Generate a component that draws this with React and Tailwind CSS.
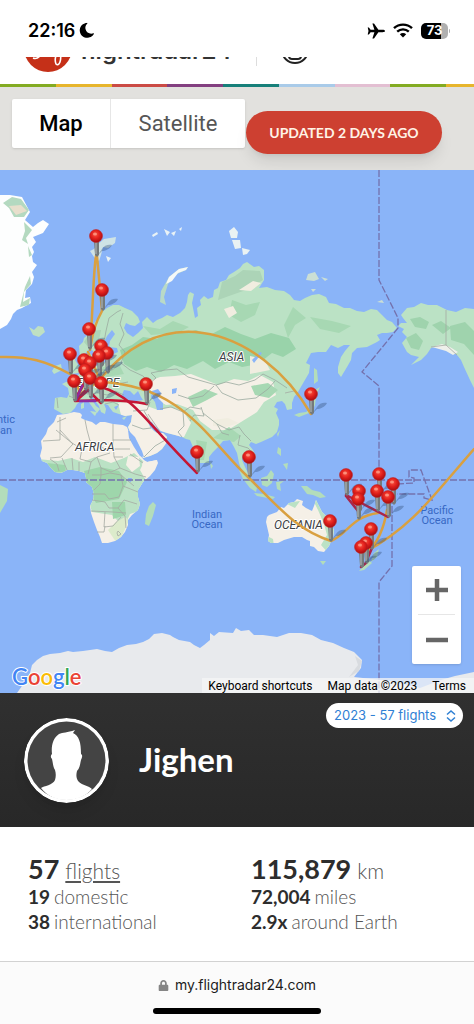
import { FaMoon, FaLock } from "react-icons/fa";

const stripes = [
  "bg-[#83ab22]",
  "bg-[#e7b52c]",
  "bg-[#cb4b45]",
  "bg-[#833f80]",
  "bg-[#17807a]",
  "bg-[#a9cbe9]",
  "bg-[#e3bfd2]",
  "bg-[#83ab22]",
];

const pins = [
  [96, 236], [102, 290], [89, 329], [101, 346], [107, 353], [70, 354], [99, 356],
  [84, 360], [90, 363], [85, 370], [90, 378], [74, 381], [101, 383], [146, 384],
  [311, 394], [197, 452], [249, 457], [379, 474], [346, 475], [393, 484],
  [359, 491], [377, 491], [388, 497], [358, 499], [330, 521], [371, 529],
  [366, 543], [361, 547],
];

const eurasia =
  "M80 357L79 346L83 342L84 338L90 333L92 328L95 322L98 318L102 312L107 308L113 305L119 305L125 308L132 311L138 317L140 322L135 326L130 325L126 323L124 328L127 333L133 337L138 333L143 328L142 322L147 317L153 323L157 320L162 318L167 315L173 317L180 313L185 308L187 302L188 295L190 292L194 294L192 303L195 318L198 316L197 308L201 305L200 300L204 296L208 299L213 297L214 290L218 288L220 282L226 280L229 275L234 272L240 268L243 264L247 262L254 267L259 266L264 270L264 280L259 288L267 287L275 290L284 291L290 295L294 300L300 301L305 298L312 295L319 294L326 297L329 303L336 304L344 308L350 308L357 311L364 312L371 309L377 310L382 315L387 320L392 322L397 328L393 332L387 333L382 333L377 335L380 340L377 342L367 347L357 348L352 353L351 360L347 367L341 377L338 373L338 367L341 357L345 351L350 345L344 345L338 348L331 345L326 352L318 352L311 353L306 363L310 365L309 373L302 385L298 392L294 397L292 403L292 409L287 410L285 404L282 401L277 402L274 407L278 409L276 413L279 420L279 425L277 432L272 437L261 442L256 444L251 442L249 445L253 450L256 456L252 461L249 460L247 457L243 455L242 460L245 467L250 477L246 475L241 469L239 463L237 453L234 447L230 440L223 441L218 447L213 452L209 457L209 463L204 463L199 463L196 454L193 447L190 440L186 439L182 437L175 435L167 433L161 431L155 426L152 422L147 420L150 427L154 431L157 433L163 433L167 437L167 442L162 449L157 453L150 456L143 458L140 452L138 447L133 439L130 432L128 427L131 422L132 415L125 416L119 414L113 412L110 408L108 405L104 404L106 409L105 414L101 412L99 406L96 402L93 397L90 397L96 406L100 409L97 413L93 408L88 401L82 400L77 404L75 408L70 413L63 414L54 409L55 398L61 397L67 398L69 394L68 388L62 384L66 382L72 381L76 377L80 373L84 369L86 363L86 355L89 352L92 356L91 363L96 366L103 363L110 360L111 355L118 352L117 348L109 347L110 341L115 334L112 330L107 336L104 342L105 347L101 352L98 357L95 357L93 351L90 348L86 353Z";

const africa =
  "M57 415L66 414L74 412L80 413L82 415L81 418L85 420L92 422L96 425L100 422L105 422L113 424L123 425L127 427L129 432L131 440L135 446L138 453L144 460L147 462L157 460L158 463L155 470L150 476L143 482L140 487L138 490L138 497L140 504L138 510L132 515L128 520L128 525L125 532L121 537L115 541L108 543L102 543L100 537L97 530L94 522L91 513L90 506L93 500L94 494L92 487L86 482L86 478L85 473L79 471L73 470L67 470L61 473L55 472L51 468L47 463L42 461L40 456L42 448L41 441L46 434L48 428L54 422Z";

const america =
  "M401 315L407 308L414 307L421 303L428 305L437 305L447 310L456 312L465 308L474 309V388L470 380L464 367L461 360L457 355L452 351L447 348L438 346L431 348L427 354L421 360L411 365L419 357L411 355L407 352L402 343L407 337L402 332L404 329L398 326L401 323L407 323L403 318Z";

const australia =
  "M266 522L267 517L269 515L277 512L281 507L284 508L289 503L294 502L297 499L303 501L302 505L306 508L312 511L314 506L316 500L319 506L322 512L326 516L330 522L334 530L333 537L329 546L324 552L318 551L314 547L310 546L310 541L307 540L302 537L294 537L284 540L278 543L271 543L268 541L269 535Z";

function Land() {
  return (
    <g>
      <path
        d="M0 195L10 195L22 197L30 212L25 220L33 227L38 223L43 220L49 224L43 233L33 237L36 242L32 247L34 252L32 256L33 262L37 265L32 272L34 277L32 284L26 290L25 298L30 297L31 303L22 308L17 310L13 314L11 319L7 325L0 329Z"
        fill="#fdfefe"
      />
      <path d="M3 203L12 197L21 199L29 210L24 217L14 217L9 208ZM24 222L32 230L26 238L28 244L22 240L25 231ZM28 246L32 255L29 257ZM30 276L31 284L24 292L23 302L30 298L29 305L20 307L25 287Z" fill="#b4d9c0" />
      <path d="M9 206L21 205L27 211L16 215Z" fill="#e8dfcc" />
      <path d="M29 327L34 330L38 326L43 327L45 332L39 337L33 335Z" fill="#bfe0c3" />
      <path d="M97 245L104 239L116 237L115 243L108 248L103 247L101 255L99 261L94 257L90 251L94 249Z" fill="#cfe3e5" />
      <path d="M106 256L111 258L108 262ZM152 235L157 232L158 234L153 237ZM164 229L170 232L167 236ZM171 233L176 231L174 236ZM179 229L182 227L181 231Z" fill="#e9f2f5" />
      <path d="M229 231L234 227L238 232L237 238L231 238ZM232 240L240 240L241 248L235 249ZM242 248L250 250L247 254L243 255Z" fill="#eaf2f3" />
      <path d="M188 267L179 269L169 277L161 291L160 302L166 305L164 297L168 284L177 274L186 270Z" fill="#b9dac7" />
      <path d="M188 267L179 269L169 277L166 284L172 281L178 273L186 270Z" fill="#f4f8f8" />
      <path d="M306 280L308 274L315 272L319 279L314 281ZM321 277L328 279L325 281ZM311 289L316 289L313 292ZM377 302L382 300L384 303Z" fill="#cbdfd5" />
      <path d={eurasia} fill="#bbe2c5" />
      <path d={africa} fill="#f5f0e7" />
      <path d={america} fill="#bbe2c5" />
      <path d={australia} fill="#f5f0e7" />
      <path d="M68 353L72 350L76 355L75 360L80 368L79 373L70 374L73 368L69 364L71 359ZM55 366L61 364L62 370L54 374L52 371Z" fill="#bbe2c5" />
      <path d="M81 404L84 402L84 408L81 409ZM90 411L97 412L95 416ZM107 417L112 417ZM122 418L127 416L124 420Z" fill="#bbe2c5" />
      <path d="M239 470L244 474L252 482L257 488L256 492L250 488L243 479ZM254 493L264 494L275 497L273 499L257 496ZM261 478L267 476L271 470L274 474L272 483L267 487L262 485ZM276 482L284 481L280 484L281 491L277 489ZM278 447L281 449L281 456L277 453ZM283 464L288 463L287 470ZM301 486L307 486L312 490L320 492L326 497L320 498L313 495L307 494ZM320 561L326 561L323 565ZM277 434L280 430L278 437ZM294 415L299 413L306 412L311 408L313 401L316 397L315 405L312 412L304 415L299 417ZM315 390L320 387L317 393ZM314 368L317 370L318 381L314 384ZM149 506L153 502L156 505L153 516L149 526L145 524L146 514ZM374 553L379 549L377 557L371 562ZM369 560L372 563L364 570L359 571ZM0 485L8 489L7 501L0 513ZM210 462L213 466L211 469Z" fill="#b3ddbb" />
      <path
        d="M17 693L24 683L30 673L32 665L37 660L43 656L50 654L60 653L68 651L73 652L83 651L97 649L105 651L112 652L119 648L127 645L136 644L143 642L149 639L154 634L162 633L170 635L173 637L179 640L190 642L194 645L200 648L204 645L210 640L210 633L214 636L219 632L233 633L236 628L241 631L249 630L254 635L263 635L277 637L289 633L301 633L312 635L321 640L333 643L344 648L354 652L362 660L361 668L354 677L390 681L420 688L441 680L455 676L474 672V693Z"
        fill="#e8eaed"
      />
      <path d="M355 656L362 661L359 671L349 677L358 665Z" fill="#d8dbdf" />
    </g>
  );
}

function Terrain() {
  return (
    <g>
      <clipPath id="eurasia-shape">
        <path d={eurasia} />
      </clipPath>
      <clipPath id="africa-shape">
        <path d={africa} />
      </clipPath>
      <clipPath id="australia-shape">
        <path d={australia} />
      </clipPath>
      <g clipPath="url(#eurasia-shape)">
        <path d="M120 350L132 345L143 337L157 339L168 331L184 333L196 330L210 335L225 327L241 334L255 339L271 333L289 338L296 349L283 357L272 353L258 364L242 367L229 362L215 369L203 361L187 369L174 365L161 372L147 367L136 371L124 364Z" fill="#99d3aa" />
        <path d="M222 282L235 276L243 270L260 271L263 280L246 290L229 296L218 300ZM91 331L101 330L98 345L88 347L84 342Z" fill="#acd4b7" />
        <path d="M232 300L246 305L260 302L255 315L241 322L229 315ZM293 307L306 318L295 325L288 338L284 325ZM310 317L332 321L351 326L339 333L320 329ZM143 326L160 329L173 321L189 327L178 333L151 335ZM98 368L119 364L124 374L107 377Z" fill="#a7d8b3" />
        <path d="M144 383L160 377L175 376L191 374L206 380L218 385L234 379L248 381L260 375L273 382L276 395L264 402L257 412L241 422L228 430L212 430L200 421L193 410L177 404L166 405L154 398Z" fill="#f5f0e7" />
        <path d="M118 403L134 401L147 406L158 410L170 407L183 411L191 423L184 437L165 438L173 450L145 463L125 431Z" fill="#f5f0e7" />
        <path d="M239 290L253 281L261 283L251 291ZM224 309L233 306L237 313L229 318ZM91 356L96 355L96 358ZM250 356L264 359L270 370L250 374ZM213 426L226 427L239 423L228 418L213 420Z" fill="#f0ede0" />
        <path d="M188 397L205 389L218 394L207 400L193 407ZM213 438L229 427L241 436L234 442L223 440ZM251 386L268 383L278 390L269 398L255 395ZM196 440L207 442L204 460L199 460Z" fill="#a7d8b3" />
      </g>
      <g clipPath="url(#africa-shape)">
        <path d="M38 459L58 461L71 458L83 462L95 457L111 463L124 458L134 453L144 462L140 470L147 482L139 491L142 510L130 514L124 527L112 515L92 512L84 484L60 478Z" fill="#bbe2c5" />
        <path d="M47 463L65 465L66 472L51 473ZM84 471L100 467L119 471L127 482L119 499L96 503L88 489ZM112 502L125 502L126 515L113 519Z" fill="#9ed6ab" />
        <path d="M128 456L139 457L140 466L132 472L126 465ZM142 462L158 458L150 475L143 477Z" fill="#f5f0e7" />
        <path d="M108 530L116 522L125 517L129 520L118 545Z" fill="#dcebcb" />
      </g>
      <g clipPath="url(#australia-shape)">
        <path d="M313 500L318 510L324 524L327 535L321 545L330 555L345 535L322 498ZM263 534L273 539L274 546L266 547ZM285 503L300 501L295 508Z" fill="#bbe2c5" />
      </g>
      <path d="M410 319L420 317L429 322L426 329L415 327ZM432 325L441 321L451 328L443 334ZM406 338L416 333L423 341L419 350L411 348ZM450 326L465 322L474 331V355L464 344L451 340Z" fill="#9fd3ad" />
      <path d="M432 347L442 344L450 347L458 352L453 355L446 351Z" fill="#eef0ea" />
      {/* inland seas */}
      <path d="M121 397L124 390L130 391L134 395L138 391L141 397L143 400L136 401L128 401ZM152 391L158 389L161 393L158 398L163 403L163 410L157 410L155 402L151 397ZM172 389L177 388L176 393L172 394ZM114 407L119 405L116 410ZM128 430L135 437L142 451L144 457L140 456L134 447L129 438Z" fill="#8ab4f8" />
      <path d="M252 360L260 352L262 353L254 363ZM109 357L112 348L116 348L113 358ZM128 478L132 478L131 482L128 481Z" fill="#8ab4f8" />
    </g>
  );
}

function Borders() {
  return (
    <g fill="none">
      <path
        d="M104 342L106 331L109 318L117 312L121 310M123 313L120 324L124 334L119 345L125 352L121 363L130 370L143 376L150 383L156 378L151 373L165 370L177 369L188 377L202 381L216 385M140 387L151 391L155 398M216 385L226 382L239 385L255 380L263 374L275 380L287 388M216 385L222 393L238 400L256 398L268 389L275 381M178 395L190 399L203 396L214 386M160 409L171 407L183 412L190 407L201 409M183 412L184 426L178 432L182 437M190 421L194 415L204 416L201 407M203 413L217 424L229 430L239 427L244 434L251 441M217 424L222 433L229 435M240 435L238 445L248 448L253 453M133 411L147 410L150 402M144 411L150 421M132 425L143 429L151 428M144 457L155 446L167 439M75 380L83 385L88 383L90 375M69 396L79 400M87 394L98 393L107 395L115 391L124 395M98 383L109 380L117 384L128 382M100 370L112 370L122 363M105 404L113 402L119 405M57 398L58 408"
        stroke="#9ba99f"
        strokeWidth="0.8"
      />
      <path
        d="M57 422L66 418M60 430L72 443L82 449L90 441L105 449L130 449M60 417V440L43 441M56 430L73 444L61 457L50 458M85 420L87 430L90 441M113 424V440H131M113 440L114 457L123 457M82 449L80 459L91 462L97 457L110 453M50 459L57 464L59 471M62 458L67 470M72 458L73 470M79 462V471M91 462L88 474M97 457L101 468L111 472L120 468L114 457M92 475L101 475L100 484L94 490M101 468L101 475L110 473L121 475L123 486L119 497L109 499L105 494L92 494M120 468L135 474L146 477M121 475L134 486M123 486L138 492M92 500L105 502L109 508L118 508L124 500L137 504M91 511L113 512L126 513M105 512L104 527L113 526L121 517M97 532L104 532L105 526M118 508L125 516L126 528M130 454L143 463M118 531L121 534L118 536L117 533L118 531M148 414L159 430M446 310V345L457 355M294 391L285 393M446 345L431 347"
        stroke="#a5aaa2"
        strokeWidth="0.8"
      />
      <path
        d="M0 480H474M379 170V280L398 318V328L362 372L379 386V484M392 488V566L379 582V693M397 484L414 483V478L409 477V470H421L432 500L424 498V494H397"
        stroke="#7471ad"
        strokeWidth="1.3"
        strokeDasharray="7 2"
      />
    </g>
  );
}

function Routes() {
  return (
    <g fill="none" strokeWidth="2.5" strokeLinecap="round">
      <g stroke="#d9a040">
        <path d="M96 256C93 275 93 310 90 348M97 256L102 311C96 322 93 330 90 350" />
        <path d="M0 357C28 356 46 361 70 374" />
        <path d="M101 378C130 343 163 330 195 332C247 336 289 376 311 414" />
        <path d="M101 382C184 386 208 440 248 477C278 506 296 530 331 541C347 534 353 516 378 513" />
        <path d="M474 449C436 492 413 527 365 552M387 510C384 528 377 543 368 552" />
        <path d="M70 372L80 392L99 354M88 352L100 380L78 396" />
      </g>
      <g stroke="#c51635">
        <path d="M101 387C135 397 147 424 197 473" />
        <path d="M75 401C98 400 122 399 147 404M75 401L87 389L101 403M75 399L85 382M77 400L87 391" />
        <path d="M346 496L358 511M346 495L388 517M366 562L372 548M361 567L366 563" stroke="#a9264a" />
      </g>
      <path d="M80 401L95 401M76 400L82 386" stroke="#91299c" />
    </g>
  );
}

function Pin({ x, y }) {
  return (
    <g transform={`translate(${x} ${y})`}>
      <path d="M1 20L6 13C8 9 13 8 16 9C14 13 9 15 6 15Z" fill="#36547f" opacity="0.4" />
      <path d="M-2 5H3V19L1 21L-1 19Z" fill="#747b7c" />
      <path d="M0 6V18" stroke="#b6bebd" strokeWidth="1" />
      <circle r="6.5" fill="url(#pin-head)" stroke="#c02020" strokeWidth="0.5" />
      <ellipse cx="-1" cy="-2" rx="2" ry="1.6" fill="#ffa08b" opacity="0.8" />
    </g>
  );
}

function WorldMap() {
  return (
    <svg viewBox="0 170 474 523" className="block h-auto w-full bg-[#8ab4f8]" role="img" aria-label="Flight map">
      <defs>
        <radialGradient id="pin-head" cx="45%" cy="38%" r="60%">
          <stop offset="0" stopColor="#fb5240" />
          <stop offset="0.55" stopColor="#e01f1b" />
          <stop offset="1" stopColor="#a90f12" />
        </radialGradient>
      </defs>
      <Land />
      <Terrain />
      <Borders />
      <g
        className="font-[Roboto,sans-serif] text-[12px] italic"
        fill="#3c4043"
        stroke="#ffffff"
        strokeWidth="2"
        strokeLinejoin="round"
        paintOrder="stroke"
      >
        <text x="219" y="361">ASIA</text>
        <text x="75" y="451">AFRICA</text>
        <text x="274" y="529">OCEANIA</text>
        <text x="76" y="387">EUROPE</text>
      </g>
      <g className="font-[Roboto,sans-serif] text-[11px]" fill="#3768c4" textAnchor="middle">
        <text x="207" y="518">Indian</text>
        <text x="207" y="528">Ocean</text>
        <text x="437" y="514">Pacific</text>
        <text x="437" y="524">Ocean</text>
        <text x="15" y="423" textAnchor="end">Atlantic</text>
        <text x="12" y="434" textAnchor="end">Ocean</text>
      </g>
      <Routes />
      {pins.map(([x, y]) => (
        <Pin key={`${x}-${y}`} x={x} y={y} />
      ))}
    </svg>
  );
}

function StatusBar() {
  return (
    <div className="flex h-[57px] items-center justify-between bg-white pl-7 pr-6 pt-1 text-black">
      <div className="flex items-center gap-1">
        <span className="font-[Inter,sans-serif] text-[18px] font-semibold">22:16</span>
        <FaMoon className="size-[15px] -rotate-12" />
      </div>
      <div className="flex items-center gap-2">
        <svg viewBox="0 0 18 16" className="h-4 w-[18px]">
          <path d="M18 8C18 7.2 16.8 6.8 15.6 6.8H11.4L7 .4H5.4L7.4 6.8H3.6L1.9 4.6H.7L1.5 8L.7 11.4H1.9L3.6 9.2H7.4L5.4 15.6H7L11.4 9.2H15.6C16.8 9.2 18 8.8 18 8Z" />
        </svg>
        <svg viewBox="0 0 20 15" className="h-[15px] w-5">
          <path d="M1 5.2C6 .4 14 .4 19 5.2M4.2 8.6C7.5 5.6 12.5 5.6 15.8 8.6" fill="none" stroke="#000" strokeWidth="2.4" />
          <path d="M6.8 11.3C8.6 9.6 11.4 9.6 13.2 11.3L10 14.6Z" />
        </svg>
        <div className="flex items-center gap-px">
          <div className="flex h-4 w-[27px] items-center justify-center rounded-[5px] bg-linear-to-r from-black from-73% to-[#b0b0b0] to-73% font-[Inter,sans-serif] text-[13px] font-bold text-white">
            73
          </div>
          <div className="h-1 w-px rounded-r bg-[#b0b0b0]" />
        </div>
      </div>
    </div>
  );
}

function SiteHeader() {
  return (
    <header>
      <div className="flex h-[27px] items-end overflow-hidden bg-white pb-3 pl-6">
        <svg viewBox="0 0 48 48" className="size-12 shrink-0">
          <circle cx="24" cy="24" r="24" fill="#c53018" />
          <path d="M9 34C14 36 18 31 21 22M38 24C32 28 30 35 32 40C35 43 38 36 36 29" fill="none" stroke="#fff" strokeWidth="1.6" />
        </svg>
        <a href="#home" className="mb-2 ml-2 font-[Inter,sans-serif] text-[24px] leading-[26px] font-semibold text-[#333]">
          flightradar24
        </a>
        <div className="mb-1.5 ml-6 h-12 w-px shrink-0 bg-[#ddd]" />
        <button type="button" aria-label="Account" className="mb-2 ml-6 flex size-7 shrink-0 items-end justify-center rounded-full border-2 border-[#222] pb-0.5">
          <span className="block h-2 w-3.5 rounded-full border-2 border-[#222]" />
        </button>
      </div>
      <div className="flex h-[3px]">
        {stripes.map((color, i) => (
          <div key={i} className={`flex-2 ${color}`} />
        ))}
        <div className="flex-1 bg-[#e7b52c]" />
      </div>
    </header>
  );
}

function MapToolbar() {
  return (
    <div className="flex h-[83px] items-start bg-[#e2e1de] px-3 pt-3">
      <div className="flex h-[49px] rounded-xs bg-white font-[Roboto,sans-serif] text-[22px] shadow">
        <button type="button" className="w-[99px] border-r border-[#e6e6e6] font-medium text-black">
          Map
        </button>
        <button type="button" className="w-[134px] text-[#565656]">
          Satellite
        </button>
      </div>
      <button
        type="button"
        className="ml-px mt-3 h-[43px] w-[196px] rounded-full bg-[#cd4031] font-[Lato,sans-serif] text-[14px] font-bold text-[#fff3e6] shadow-lg"
      >
        UPDATED 2 DAYS AGO
      </button>
    </div>
  );
}

function MapControls() {
  return (
    <>
      <div className="absolute bottom-[29px] right-[13px] flex w-[49px] flex-col rounded-xs bg-white px-1.5 shadow">
        <button type="button" aria-label="Zoom in" className="flex h-[49px] items-center justify-center border-b border-[#e6e6e6]">
          <svg viewBox="0 0 22 22" className="size-[22px]">
            <path d="M11 0V22M0 11H22" stroke="#666" strokeWidth="4.5" />
          </svg>
        </button>
        <button type="button" aria-label="Zoom out" className="flex h-[49px] items-center justify-center">
          <svg viewBox="0 0 22 22" className="size-[22px]">
            <path d="M0 11H22" stroke="#666" strokeWidth="4.5" />
          </svg>
        </button>
      </div>
      <a
        href="#google"
        className="absolute bottom-0.5 left-3 font-[Lato,sans-serif] text-[22px] leading-7 font-semibold [paint-order:stroke] [-webkit-text-stroke:2px_white]"
      >
        <span className="text-[#4285f4]">G</span>
        <span className="text-[#ea4335]">o</span>
        <span className="text-[#fbbc05]">o</span>
        <span className="text-[#4285f4]">g</span>
        <span className="text-[#34a853]">l</span>
        <span className="text-[#ea4335]">e</span>
      </a>
      <div className="absolute bottom-0 right-0 flex h-[15px] items-center gap-[15px] bg-[#f5f5f5]/75 pl-1.5 pr-2 font-[Roboto,sans-serif] text-[12px] text-black">
        <button type="button">Keyboard shortcuts</button>
        <span>Map data ©2023</span>
        <a href="#terms">Terms</a>
      </div>
    </>
  );
}

function Profile() {
  return (
    <section className="relative flex h-[134px] items-center gap-[30px] bg-linear-to-b from-[#303030] to-[#282828] px-6">
      <svg viewBox="0 0 85 85" className="size-[85px] rounded-full shadow-lg" role="img" aria-label="Avatar">
        <circle cx="42.5" cy="42.5" r="42.5" fill="#fff" />
        <circle cx="42.5" cy="42.5" r="39" fill="#444" />
        <path
          d="M17 70C20 68 29 67 31 62C32 59 32 55 31 52C29 49 29 45 28 41C26 39 27 37 28 36C27 28 29 20 35 16C39 14 43 15 51 12L49 15C55 18 57 24 57 36C59 37 58 40 57 42C56 46 56 50 53 53C52 57 52 61 55 64C58 67 65 68 68 71C62 78 53 82 42.5 82S23 78 17 70Z"
          fill="#fff"
        />
      </svg>
      <h1 className="font-[Lato,sans-serif] text-[33px] font-bold text-white">Jighen</h1>
      <div className="absolute right-[11px] top-2.5">
        <select
          aria-label="Year"
          className="block h-[25px] w-[137px] appearance-none rounded-full bg-white pl-2 font-[Inter,sans-serif] text-[13px] text-[#2f80d4]"
        >
          <option>2023 - 57 flights</option>
        </select>
        <svg viewBox="0 0 10 12" className="pointer-events-none absolute right-[7px] top-[7px] h-3 w-2.5">
          <path d="M1 4.5L5 1L9 4.5M1 7.5L5 11L9 7.5" fill="none" stroke="#2f80d4" strokeWidth="1.5" />
        </svg>
      </div>
    </section>
  );
}

function Stats() {
  return (
    <section className="grid h-[134px] grid-cols-2 bg-white pl-7 pt-7 font-[Lato,sans-serif] text-[19px] leading-[25px] font-light text-[#555]">
      <div>
        <p className="flex items-baseline gap-1.5 text-[21px] leading-[27px]">
          <strong className="text-[27px] font-bold text-[#2d2d2d]">57</strong>
          <a href="#flights" className="underline">
            flights
          </a>
        </p>
        <p className="flex items-baseline gap-1">
          <strong className="font-bold text-[#2d2d2d]">19</strong> domestic
        </p>
        <p className="flex items-baseline gap-1">
          <strong className="font-bold text-[#2d2d2d]">38</strong> international
        </p>
      </div>
      <div>
        <p className="flex items-baseline gap-1.5 text-[21px] leading-[27px]">
          <strong className="text-[27px] font-bold text-[#2d2d2d]">115,879</strong> km
        </p>
        <p className="flex items-baseline gap-1">
          <strong className="font-bold text-[#2d2d2d]">72,004</strong> miles
        </p>
        <p className="flex items-baseline gap-1">
          <strong className="font-bold text-[#2d2d2d]">2.9x</strong> around Earth
        </p>
      </div>
    </section>
  );
}

function AddressBar() {
  return (
    <footer className="flex h-[63px] flex-col items-center justify-between border-t border-[#d2d2d2] bg-[#fbfbfb] pb-2.5 pt-[11px]">
      <a href="#address" className="flex items-center gap-1.5 font-[Inter,sans-serif] text-[14px] leading-6 text-[#1c1c1c]">
        <FaLock className="size-[11px] text-[#858585]" />
        my.flightradar24.com
      </a>
      <div className="h-1.5 w-[168px] rounded-full bg-black" />
    </footer>
  );
}

export default function App() {
  return (
    <div className="min-h-screen w-full bg-white">
      <StatusBar />
      <SiteHeader />
      <MapToolbar />
      <main>
        <div className="relative">
          <WorldMap />
          <MapControls />
        </div>
        <Profile />
        <Stats />
      </main>
      <AddressBar />
    </div>
  );
}
